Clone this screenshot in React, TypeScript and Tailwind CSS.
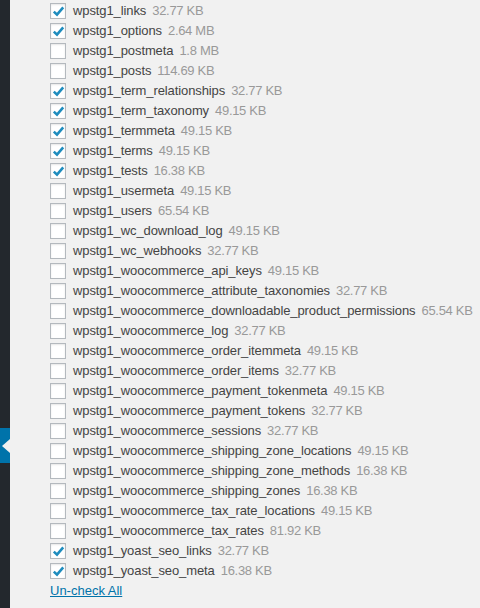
import React from "react";

const rows: [string, string, boolean][] = [
  ["wpstg1_links", "32.77 KB", true],
  ["wpstg1_options", "2.64 MB", true],
  ["wpstg1_postmeta", "1.8 MB", false],
  ["wpstg1_posts", "114.69 KB", false],
  ["wpstg1_term_relationships", "32.77 KB", true],
  ["wpstg1_term_taxonomy", "49.15 KB", true],
  ["wpstg1_termmeta", "49.15 KB", true],
  ["wpstg1_terms", "49.15 KB", true],
  ["wpstg1_tests", "16.38 KB", true],
  ["wpstg1_usermeta", "49.15 KB", false],
  ["wpstg1_users", "65.54 KB", false],
  ["wpstg1_wc_download_log", "49.15 KB", false],
  ["wpstg1_wc_webhooks", "32.77 KB", false],
  ["wpstg1_woocommerce_api_keys", "49.15 KB", false],
  ["wpstg1_woocommerce_attribute_taxonomies", "32.77 KB", false],
  ["wpstg1_woocommerce_downloadable_product_permissions", "65.54 KB", false],
  ["wpstg1_woocommerce_log", "32.77 KB", false],
  ["wpstg1_woocommerce_order_itemmeta", "49.15 KB", false],
  ["wpstg1_woocommerce_order_items", "32.77 KB", false],
  ["wpstg1_woocommerce_payment_tokenmeta", "49.15 KB", false],
  ["wpstg1_woocommerce_payment_tokens", "32.77 KB", false],
  ["wpstg1_woocommerce_sessions", "32.77 KB", false],
  ["wpstg1_woocommerce_shipping_zone_locations", "49.15 KB", false],
  ["wpstg1_woocommerce_shipping_zone_methods", "16.38 KB", false],
  ["wpstg1_woocommerce_shipping_zones", "16.38 KB", false],
  ["wpstg1_woocommerce_tax_rate_locations", "49.15 KB", false],
  ["wpstg1_woocommerce_tax_rates", "81.92 KB", false],
  ["wpstg1_yoast_seo_links", "32.77 KB", true],
  ["wpstg1_yoast_seo_meta", "16.38 KB", true],
];

function Box({ checked }: { checked: boolean }) {
  return (
    <span className="relative w-4 h-4 shrink-0 bg-white border border-[#b4b9be] shadow-[inset_0_1px_2px_rgba(0,0,0,0.1)]">
      {checked && (
        <svg className="absolute left-[1px] top-[1px]" width="13" height="13" viewBox="0 0 13 13">
          <path d="M1.8 6.6 L5 9.6 L11.2 2.4" fill="none" stroke="#1e8cbe" strokeWidth="2.6" strokeLinecap="butt" strokeLinejoin="miter" />
        </svg>
      )}
    </span>
  );
}

export default function App() {
  return (
    <div className="w-[480px] h-[608px] overflow-hidden bg-[#f1f1f1] flex" style={{ fontFamily: "'Segoe UI', 'Liberation Sans', Arial, sans-serif" }}>
      <div className="w-[10px] shrink-0 bg-[#23282d] flex flex-col">
        <div className="h-[428px]" />
        <div className="h-[35px] bg-[#0073aa] flex items-center justify-end">
          <div className="w-0 h-0 border-y-[7px] border-y-transparent border-r-[8px] border-r-[#f1f1f1]" />
        </div>
      </div>
      <div className="flex flex-col pl-[40px] pt-[1px]">
        {rows.map(([n, s, c]) => (
          <div key={n} className="h-5 flex items-center text-[13px] whitespace-nowrap">
            <Box checked={c} />
            <span className="ml-[7px] text-[#444] tracking-[-0.1px]">{n}</span>
            <span className="ml-[6px] text-[#999] tracking-[-0.3px]">{s}</span>
          </div>
        ))}
        <a className="mt-[1px] h-[18px] flex items-center text-[13px] text-[#0073aa] underline">Un-check All</a>
      </div>
    </div>
  );
}
